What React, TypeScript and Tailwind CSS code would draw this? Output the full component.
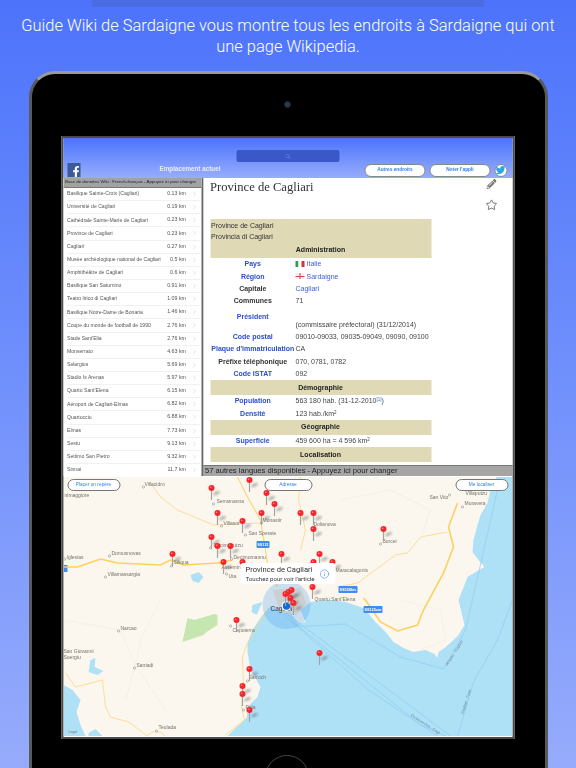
import { ChevronRight, Star, Info } from 'lucide-react'
import { FaFacebookF, FaPencilAlt, FaTwitter, FaSearch } from 'react-icons/fa'

const places: [string, string][] = [
  ['Basilique Sainte-Croix (Cagliari)', '0.13 km'],
  ['Université de Cagliari', '0.19 km'],
  ['Cathédrale Sainte-Marie de Cagliari', '0.23 km'],
  ['Province de Cagliari', '0.23 km'],
  ['Cagliari', '0.27 km'],
  ['Musée archéologique national de Cagliari', '0.5 km'],
  ['Amphithéâtre de Cagliari', '0.6 km'],
  ['Basilique San Saturnino', '0.91 km'],
  ['Teatro lirico di Cagliari', '1.09 km'],
  ['Basilique Notre-Dame de Bonaria', '1.46 km'],
  ['Coupe du monde de football de 1990', '2.76 km'],
  ['Stade Sant\'Elia', '2.76 km'],
  ['Monserrato', '4.63 km'],
  ['Selargius', '5.69 km'],
  ['Stadio Is Arenas', '5.97 km'],
  ['Quartu Sant\'Elena', '6.15 km'],
  ['Aéroport de Cagliari-Elmas', '6.82 km'],
  ['Quartucciu', '6.88 km'],
  ['Elmas', '7.73 km'],
  ['Sestu', '9.13 km'],
  ['Settimo San Pietro', '9.32 km'],
  ['Sinnai', '11.7 km'],
]

const pins: [number, number][] = [
  [211, 488], [249, 480], [266, 493], [274, 504], [261, 513], [217, 513], [242, 521], [211, 537],
  [217, 546], [230, 546], [223, 562], [242, 562], [281, 554], [172, 554], [300, 513], [313, 513],
  [313, 529], [383, 529], [319, 554], [313, 562], [332, 562], [312, 587], [236, 620], [249, 669],
  [242, 686], [242, 694], [249, 710], [319, 653], [288, 592], [285, 594], [291, 590], [290, 598], [293, 603],
]

const labels: [string, number, number][] = [
  ['Villacidro', 144, 486], ['nimaggiore', 64, 497], ['Serramanna', 216, 503], ['Villasor', 223, 525],
  ['Monastir', 262, 522], ['San Sperate', 248, 535], ['Domusnovas', 111, 555], ['Iglesias', 66, 559],
  ['Villamassargia', 107, 576], ['Siliqua', 173, 564], ['Uta', 228, 578], ['Assemini', 221, 569],
  ['Decimomannu', 233, 559], ['Decimoputzu', 213, 547], ['Dolianova', 313, 526], ['Burcei', 382, 543],
  ['San Vito', 429, 499], ['Muravera', 464, 505], ['Villaputzu', 465, 495], ['Maracalagonis', 335, 572],
  ['Quartu Sant\'Elena', 314, 601], ['Narcao', 120, 630], ['Santadi', 136, 667], ['Capoterra', 232, 632],
  ['Sarroch', 248, 679], ['Pula', 245, 709], ['Teulada', 158, 729], ['San Giovanni', 63, 653], ['Suergiu', 63, 659],
]

const towns: [number, number][] = [
  [143, 487], [213, 504], [221, 526], [261, 523], [245, 535], [109, 556], [64, 559], [105, 577],
  [171, 566], [226, 574], [231, 559], [210, 548], [380, 544], [449, 495], [462, 507], [118, 631],
  [134, 668], [230, 626], [247, 681], [243, 710], [156, 731],
]

type Row = { label: string; value?: React.ReactNode; link?: boolean; valueLink?: boolean; tall?: boolean }

function FlagItaly() {
  return (
    <span className="mr-[2px] inline-flex h-[6px] w-[9px] align-[-0.5px]">
      <span className="flex-1 bg-[#2f9e52]" />
      <span className="flex-1 bg-white" />
      <span className="flex-1 bg-[#d8333b]" />
    </span>
  )
}

function FlagSardinia() {
  return (
    <span className="relative mr-[2px] inline-block h-[6px] w-[9px] bg-[#eee] align-[-0.5px]">
      <span className="absolute left-0 top-[2.5px] h-[1px] w-full bg-[#d8434b]" />
      <span className="absolute left-[4px] top-0 h-full w-[1px] bg-[#d8434b]" />
    </span>
  )
}

function InfoRow({ label, value, link, valueLink, tall }: Row) {
  return (
    <div className={tall ? 'flex h-[23.5px]' : 'flex h-[12.35px] items-center'}>
      <div className={`w-[85.5px] shrink-0 whitespace-nowrap text-center font-bold ${link ? 'text-[#2a4fc4]' : 'text-[#333]'} ${tall ? 'pt-[5px]' : ''}`}>
        {label}
      </div>
      <div className={`whitespace-nowrap ${valueLink ? 'text-[#3f63cf]' : 'text-[#444]'} ${tall ? 'pt-[13px]' : ''}`}>{value}</div>
    </div>
  )
}

function Section({ title }: { title: string }) {
  return <div className="flex h-[15px] items-center justify-center bg-[#dfd9b5] font-bold text-[#222]">{title}</div>
}

function MapDrawing() {
  return (
    <svg viewBox="63 477 449 259" className="absolute inset-0 h-full w-full">
      <defs>
        <filter id="soft" x="-50%" y="-50%" width="200%" height="200%">
          <feGaussianBlur stdDeviation="1" />
        </filter>
      </defs>
      <rect x="63" y="477" width="449" height="259" fill="#fbf6ee" />
      <polygon
        fill="#aee0f6"
        points="512,477 496,477 490,490 487,503 480,515 477,525 473,540 472,552 478,560 484,567 475,572 467,577 462,590 458,600 464,625 458,635 453,640 444,648 438,652 437,658 442,665 434,654 425,650 413,652 403,648 393,642 385,632 375,622 363,608 345,602 330,600 310,602 300,610 305,622 298,624 290,612 280,612 270,606 262,615 252,630 247,643 247,652 250,670 260,687 257,697 248,706 246,718 235,728 227,736 512,736"
      />
      <polygon fill="#aee0f6" points="63,685 72,690 80,700 76,712 80,725 85,736 63,736" />
      <polygon fill="#aee0f6" points="88,733 95,729 102,736 88,736" />
      <polygon fill="#aee0f6" points="190,575 198,572 203,577 198,583 192,581" />
      <polygon fill="#aee0f6" points="90,660 95,658 94,667 103,671 97,675 88,672" />
      <polygon fill="#aee0f6" points="252,605 262,602 256,615 251,612" />
      <rect x="63" y="565" width="4" height="7" fill="#3f8cf2" />
      <polygon fill="#c5e6ae" points="187,618 194,620 214,614 217,615 217,625 206,632 203,635 182,642" />

      {/* roads */}
      <g fill="none" stroke="#fbd77f">
        <polyline strokeWidth="0.8" points="150,483 160,497 177,510 213,525 260,523" />
        <polyline strokeWidth="1.2" points="237,477 247,497 260,520 267,563 277,587" />
        <polyline strokeWidth="0.8" points="447,532 420,537 407,553 395,555 357,583 337,587" />
        <polyline strokeWidth="0.8" points="300,477 298,500 305,530 300,550" />
        <polyline strokeWidth="0.8" points="65,673 75,687 102,680 105,707 110,717 128,722 143,733 146,736" />
        <polyline strokeWidth="0.8" points="267,610 247,643 242,657 243,687 241,707 244,720 225,735" />
        <polyline strokeWidth="0.8" points="146,736 152,732 160,732 165,736" />
      </g>
      <g fill="none" stroke="#f2efe6" strokeWidth="0.8">
        <polyline points="63,620 90,625 120,630 135,665 125,700" />
        <polyline points="160,600 140,640 135,665 165,710" />
        <polyline points="400,600 440,610 445,640 420,650" />
        <polyline points="340,500 390,490 430,510 420,540" />
      </g>
      <g fill="none" stroke="#fdd060" strokeWidth="1.6">
        <polyline points="60,567 77,567 100,559 117,563 160,565 170,560 183,565 217,563 232,560" />
        <polyline points="457,503 448,527 453,547 443,573 423,610 417,625 397,631 380,622 367,603 363,598" />
      </g>

      {/* ferry lines */}
      <g fill="none" stroke="#8fcdf2" strokeWidth="0.7">
        <polyline points="285,613 450,736" />
        <polyline points="286,617 368,690 437,736" />
        <polyline points="293,627 345,624 400,657 443,669 465,630 497,490" />
        <polyline points="457,736 473,682 497,640 512,600" />
        <polyline points="290,620 420,725 445,736" />
      </g>
      <g fill="#6c8796" fontFamily="'Liberation Sans', sans-serif" fontSize="3.8">
        <text transform="translate(447 666) rotate(-58)">Arbatax - Cagliari</text>
        <text transform="translate(463 714) rotate(-72)">Cagliari - Tunis</text>
        <text transform="translate(410 716) rotate(33)">Civitavecchia - Cagl</text>
      </g>

      {/* shields */}
      <g fontFamily="'Liberation Sans', sans-serif" fontSize="3.8" fill="#fff" fontWeight="700" textAnchor="middle">
        <rect x="256" y="541" width="13" height="7" rx="1" fill="#3f8cf2" />
        <text x="262.5" y="546">SS131</text>
        <rect x="338" y="586" width="19" height="7" rx="1" fill="#3f8cf2" />
        <text x="347.5" y="591">SS554bis</text>
        <rect x="363" y="606" width="19" height="7" rx="1" fill="#3f8cf2" />
        <text x="372.5" y="611">SS125var</text>
      </g>

      {/* towns */}
      {towns.map(([x, y], i) => (
        <circle key={i} cx={x} cy={y} r="1.1" fill="#fff" stroke="#8a8a8a" strokeWidth="0.6" />
      ))}
      <g fill="#77746e" fontFamily="'Liberation Sans', sans-serif" fontSize="5">
        {labels.map(([t, x, y]) => (
          <text key={t} x={x} y={y}>{t}</text>
        ))}
        <text x="68" y="733" fontSize="3.5">Legal</text>
      </g>

      {/* Cagliari area */}
      <circle cx="286" cy="605" r="24" fill="#5aa7f0" opacity="0.3" />
      <polygon fill="#c9c9c6" opacity="0.7" points="272,590 300,588 306,604 296,615 280,612" />
      <text x="270" y="611" fontFamily="'Liberation Sans', sans-serif" fontSize="6.5" fill="#333">Cagliari</text>
      <circle cx="286" cy="606" r="5" fill="#fff" />
      <circle cx="286" cy="606" r="3.7" fill="#0a6ee0" />

      {/* pins */}
      {pins.map(([x, y], i) => (
        <g key={i}>
          <ellipse cx={x + 5} cy={y + 5} rx="3.5" ry="1.6" fill="#555" opacity="0.45" filter="url(#soft)" transform={`rotate(-25 ${x + 5} ${y + 5})`} />
          <rect x={x - 0.6} y={y} width="1.2" height="12" fill="#a3a3a3" />
          <circle cx={x} cy={y} r="3" fill="#f8262c" />
          <circle cx={x - 0.8} cy={y - 0.8} r="0.8" fill="#ff8f8f" />
        </g>
      ))}
    </svg>
  )
}

export default function App() {
  return (
    <div className="relative flex h-[768px] w-[576px] flex-col items-center overflow-hidden bg-gradient-to-b from-[#4d73fb] to-[#96abfb] font-['Liberation_Sans',sans-serif]">
      <div className="h-[7px] w-[392px] shrink-0 bg-[#4a6ce2]" />
      <h1 className="mt-[9px] h-[48px] w-[545px] shrink-0 text-center font-['Roboto',sans-serif] text-[16.45px] font-light leading-[20.5px] text-white">
        Guide Wiki de Sardaigne vous montre tous les endroits à Sardaigne qui ont une page Wikipedia.
      </h1>

      <div className="mt-[7px] flex h-[800px] w-[519px] shrink-0 flex-col items-center rounded-[26px] border-[3px] border-[#5a5a5a] border-t-[#9a9a9a] bg-black">
        <div className="mt-[27px] h-[7px] w-[7px] -translate-x-[1px] rounded-full border border-[#222] bg-[#2a3a55]" />
        <div className="mt-[28px] flex h-[603px] w-[453px] -translate-x-[0.5px] flex-col border-2 border-[#4a4a4a] bg-white blur-[0.35px]">
          {/* top bar */}
          <div className="flex h-[40px] shrink-0 flex-col bg-gradient-to-b from-[#4c72fb] to-[#98acfb] pb-[1.5px]">
            <div className="mt-[12px] flex h-[12px] w-[103px] items-center justify-center self-center rounded-[2px] bg-[#3a58c8]">
              <FaSearch className="h-[5px] w-[5px] text-[#5f7be0]" />
            </div>
            <div className="mt-auto flex items-end">
              <div className="ml-[4px] flex h-[13.5px] w-[13.5px] items-end justify-end overflow-hidden bg-[#3b5a98]">
                <FaFacebookF className="-mr-[1px] h-[11px] w-[11px] text-white" />
              </div>
              <span className="mb-[3px] ml-[79px] whitespace-nowrap text-[6.3px] font-bold text-[#e8edff]">Emplacement actuel</span>
              <div className="ml-[144px] flex h-[13px] w-[61px] items-center justify-center rounded-full border border-[#888] bg-white text-[4.8px] font-bold text-[#2f7ff0]">Autres endroits</div>
              <div className="ml-[4px] flex h-[13px] w-[61px] items-center justify-center rounded-full border border-[#888] bg-white text-[4.8px] font-bold text-[#2f7ff0]">Noter l'appli</div>
              <div className="ml-[4px] flex h-[13px] w-[13px] items-center justify-center rounded-full border border-[#888] bg-white">
                <FaTwitter className="h-[10px] w-[10px] text-[#2ca7e0]" />
              </div>
            </div>
          </div>

          <div className="flex h-[298px] shrink-0 bg-[#a5a5a5]">
            {/* place list */}
            <div className="flex w-[140px] shrink-0 flex-col overflow-hidden border-r-2 border-[#666] bg-white">
              <div className="flex h-[10px] shrink-0 items-center whitespace-nowrap border-b border-[#777] bg-[#a2a2a2] pl-[2px] text-[4.4px] text-[#222]">
                Base de données Wiki : French-français - Appuyez ici pour changer
              </div>
              {places.map(([name, dist]) => (
                <div key={name} className="ml-[4px] flex h-[13.15px] shrink-0 items-center border-b border-[#f1f1f1] text-[5.1px] text-[#555]">
                  <span className="flex-1 whitespace-nowrap">{name}</span>
                  <span className="whitespace-nowrap text-[5.3px]">{dist}</span>
                  <ChevronRight className="ml-[4px] mr-[3px] h-[8px] w-[8px] text-[#c4c4c4]" strokeWidth={1.5} />
                </div>
              ))}
            </div>

            {/* article */}
            <div className="flex min-w-0 flex-1 flex-col">
              <div className="relative h-[287px] overflow-hidden bg-white pl-[7px] text-[7px] leading-[10px]">
                <div className="pt-[0.5px] font-['Liberation_Serif',serif] text-[12.6px] leading-[16px] text-[#333]">Province de Cagliari</div>
                <FaPencilAlt className="absolute left-[283px] top-[1px] h-[10px] w-[10px] text-[#777]" />
                <Star className="absolute left-[282px] top-[21px] h-[12px] w-[12px] text-[#555]" strokeWidth={1.6} />
                <div className="mt-[24.5px] w-[221px]">
                  <div className="flex h-[38.5px] flex-col bg-[#dfd9b5] text-[#333]">
                    <div className="mt-[1.5px] h-[11.5px] pl-[1px]">Province de Cagliari</div>
                    <div className="h-[11.5px] pl-[1px]">Provincia di Cagliari</div>
                    <div className="mt-[1.5px] text-center font-bold text-[#222]">Administration</div>
                  </div>
                  <div className="h-[0.5px]" />
                  <InfoRow label="Pays" link valueLink value={<><FlagItaly />Italie</>} />
                  <InfoRow label="Région" link valueLink value={<><FlagSardinia />Sardaigne</>} />
                  <InfoRow label="Capitale" valueLink value="Cagliari" />
                  <InfoRow label="Communes" value="71" />
                  <InfoRow label="Président" link tall value="(commissaire préfectoral)  (31/12/2014)" />
                  <InfoRow label="Code postal" link value="09010-09033, 09035-09049, 09090, 09100" />
                  <InfoRow label="Plaque d'immatriculation" link value="CA" />
                  <InfoRow label="Préfixe téléphonique" value="070, 0781, 0782" />
                  <InfoRow label="Code ISTAT" link value="092" />
                  <Section title="Démographie" />
                  <InfoRow label="Population" link value={<>563 180 hab. (31-12-2010<sup className="text-[4.5px] text-[#3f63cf]">[1]</sup>)</>} />
                  <InfoRow label="Densité" link value={<>123 hab./km<sup className="text-[4.5px]">2</sup></>} />
                  <Section title="Géographie" />
                  <InfoRow label="Superficie" link value={<>459 600 ha = 4 596 km<sup className="text-[4.5px]">2</sup></>} />
                  <Section title="Localisation" />
                </div>
              </div>
              <div className="flex h-[11px] items-center border-t border-[#777] bg-[#a5a5a5] pl-[2px] text-[7.6px] text-[#222]">
                57 autres langues disponibles - Appuyez ici pour changer
              </div>
            </div>
          </div>

          {/* map */}
          <div className="relative min-h-0 flex-1 overflow-hidden">
            <MapDrawing />
            <div className="absolute left-[4px] top-[3px] flex h-[12px] w-[53px] items-center justify-center rounded-full border border-[#777] bg-white text-[4.8px] text-[#2f7ff0]">Placer un repère</div>
            <div className="absolute left-[201px] top-[3px] flex h-[12px] w-[48px] items-center justify-center rounded-full border border-[#777] bg-white text-[4.8px] text-[#2f7ff0]">Adresse</div>
            <div className="absolute left-[392px] top-[3px] flex h-[12px] w-[53px] items-center justify-center rounded-full border border-[#777] bg-white text-[4.8px] text-[#2f7ff0]">Me localiser</div>
            <div className="absolute left-[177px] top-[87px] flex h-[21px] w-[95px] items-center rounded-[3px] bg-white pl-[5.5px] font-['Roboto',sans-serif] text-[#333]">
              <div className="flex-1">
                <div className="whitespace-nowrap text-[7.6px] leading-[10px]">Province de Cagliari</div>
                <div className="whitespace-nowrap text-[6.1px] leading-[8px]">Touchez pour voir l'article</div>
              </div>
              <Info className="mr-[6px] h-[10px] w-[10px] text-[#3f8cf2]" strokeWidth={1.4} />
            </div>
          </div>
        </div>
        <div className="mt-[16px] h-[44px] w-[44px] -translate-x-[1px] rounded-full border border-[#444]" />
      </div>
    </div>
  )
}
